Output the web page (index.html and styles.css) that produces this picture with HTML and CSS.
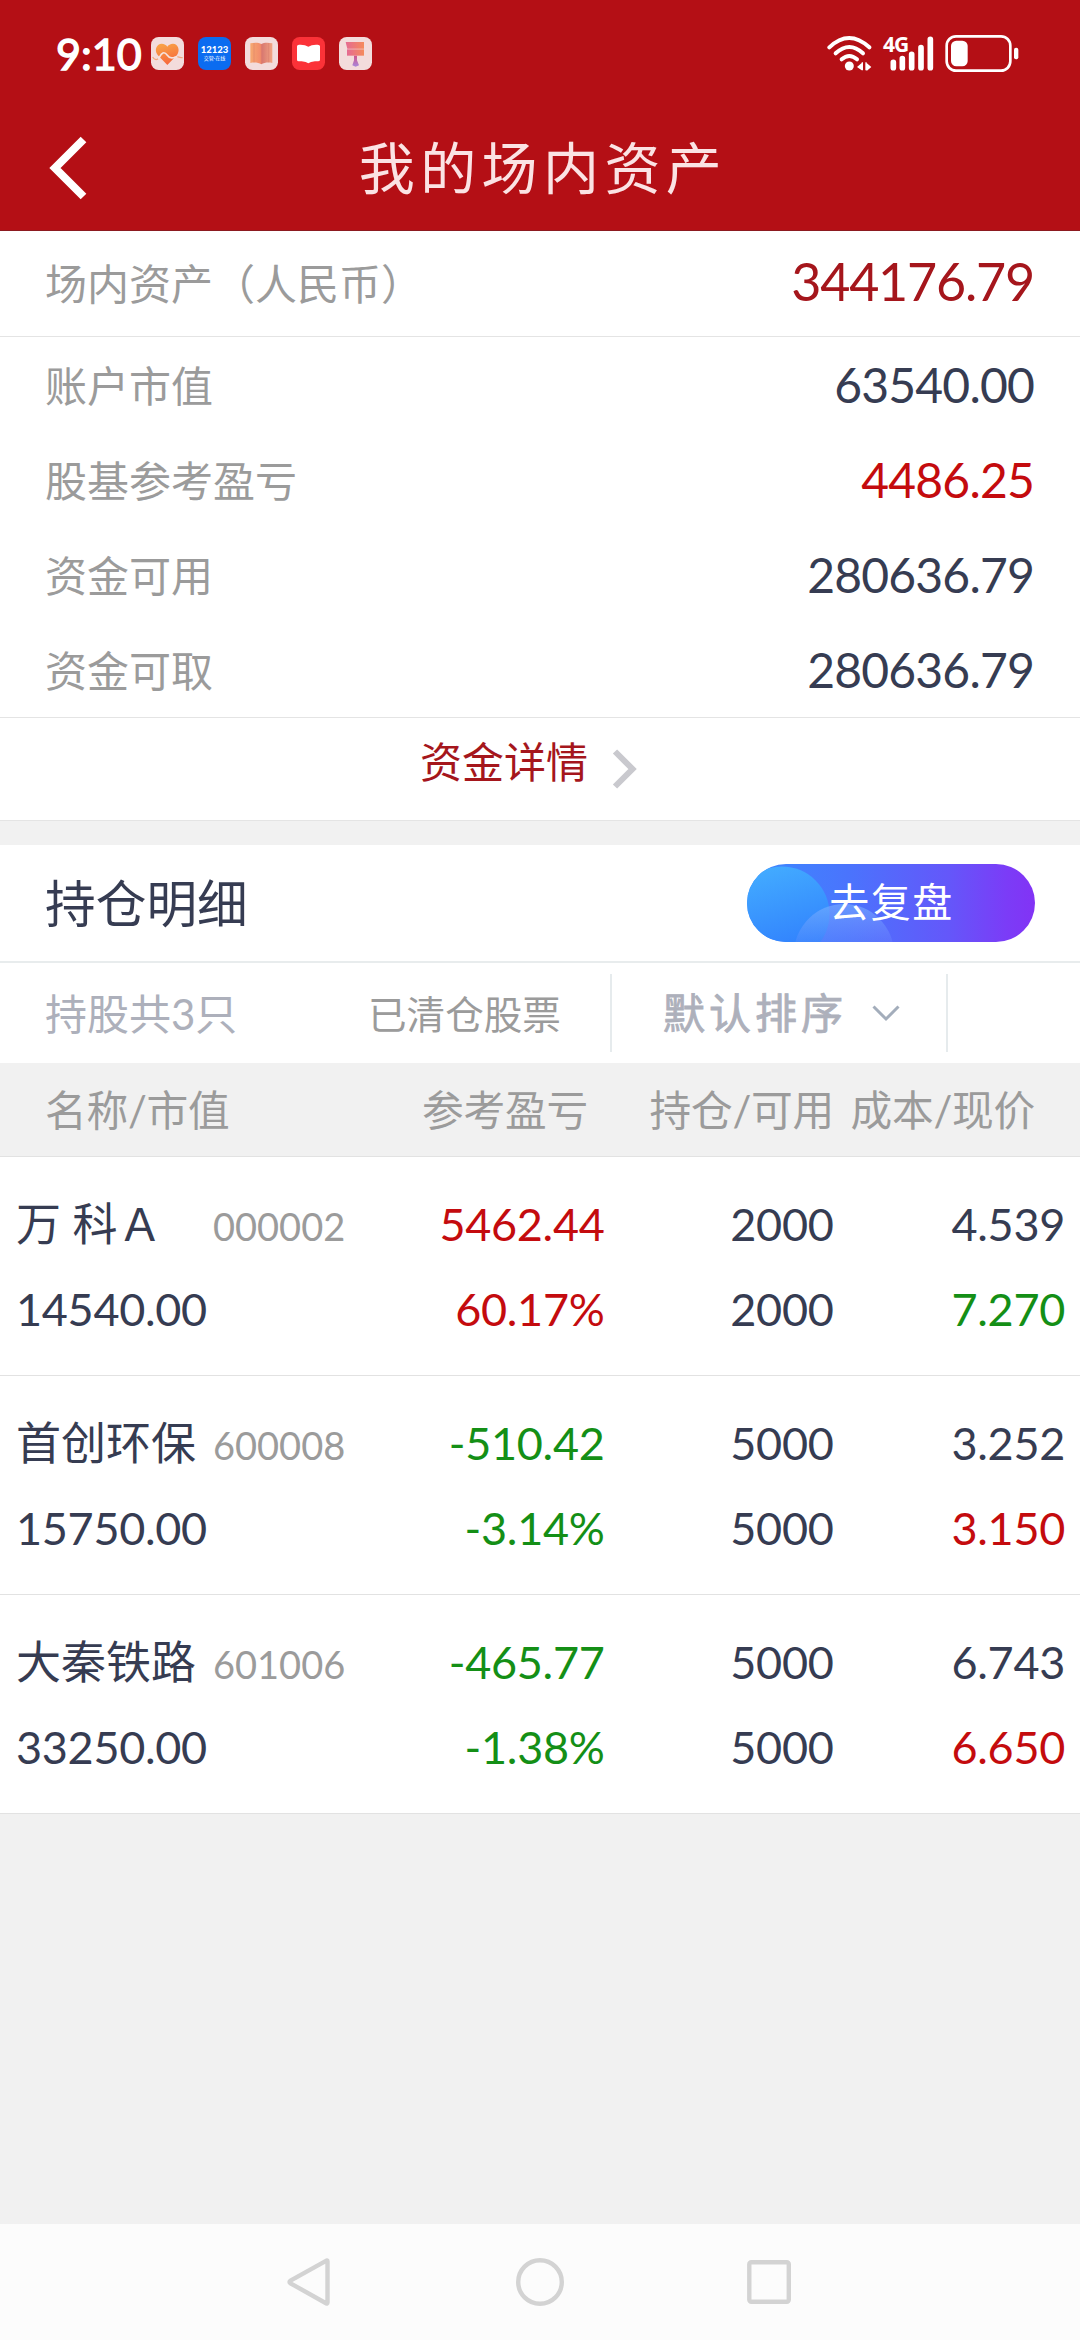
FILE: index.html
```html
<!DOCTYPE html>
<html lang="zh-CN">
<head>
<meta charset="utf-8">
<title>我的场内资产</title>
<link rel="stylesheet" href="styles.css">
</head>
<body>
<div class="screen">
  <header class="top">
    <div class="status">
      <span class="clock">9:10</span>
      <div class="apps">
        <svg class="app" viewBox="0 0 99 99"><defs><linearGradient id="heart" x1="0" y1="0" x2="0.3" y2="1"><stop offset="0" stop-color="#f9a848"/><stop offset="1" stop-color="#f76a3c"/></linearGradient></defs><rect width="99" height="99" rx="23" fill="#f3dcdc"/><path d="M49 84 20 54C8 38 18 20 32 20c8 0 14 4 17 9 3-5 9-9 17-9 14 0 23 18 12 34z" fill="url(#heart)"/><path d="M5 60c6 10 14 12 20 1 7-13 14-20 24-6 8 12 18 8 24 5 7-3 14 2 22 2" fill="none" stroke="#f6e3df" stroke-width="5"/><path d="M5 60c5 8 11 10 16 5M79 59c5 1 10 3 16 3" fill="none" stroke="#f0a680" stroke-width="4"/></svg>
        <span class="app app-traffic"><b>12123</b><i>交管·在线</i></span>
        <svg class="app" viewBox="0 0 99 99"><defs><linearGradient id="book" x1="0" y1="0" x2="1" y2="0"><stop offset="0" stop-color="#f6a871"/><stop offset=".48" stop-color="#f28b6c"/><stop offset=".53" stop-color="#d87870"/><stop offset="1" stop-color="#f2a584"/></linearGradient></defs><rect width="99" height="99" rx="23" fill="#f3dcdc"/><path d="M16 19c12-3 25-3 33 2 8-5 21-5 33-2v59c-12-3-25-1-33 4-8-5-21-7-33-4z" fill="url(#book)"/><path d="M49 21v60M27 18v58M71 18v58" stroke="#d5766b" stroke-width="2" opacity=".6"/></svg>
        <svg class="app" viewBox="0 0 99 99"><rect width="99" height="99" rx="23" fill="#fb3238"/><path d="M15 28q0-5 6-5h5q14 0 23 6 9-6 23-6h5q7 0 7 5v40q0 5-6 5h-9q-14 1-20 6-6-5-20-6h-9q-5 0-5-5z" fill="#fff"/></svg>
        <svg class="app" viewBox="0 0 99 99"><defs><linearGradient id="brush" x1="0" y1="0" x2="1" y2="0"><stop offset="0" stop-color="#e56a92"/><stop offset="1" stop-color="#f58a5c"/></linearGradient><linearGradient id="grip" x1="0" y1="0" x2="0" y2="1"><stop offset="0" stop-color="#d0568a"/><stop offset="1" stop-color="#a987dc"/></linearGradient></defs><rect width="99" height="99" rx="23" fill="#f3dcdc"/><path d="M20 15h55v20H25z" fill="url(#brush)"/><path d="M24 37h51v19H24z" fill="url(#brush)"/><path d="M45 56h9v14l6 15-10 4-10-4 5-15z" fill="url(#grip)"/></svg>
      </div>
      <div class="signals">
        <svg class="wifi" viewBox="50 45 135 111"><g fill="none" stroke="#fff" stroke-width="12" stroke-linecap="round"><path d="M57 82Q116 26 177 82"/><path d="M76 100Q117 62 158 100"/><path d="M94 118Q117 98 140 118"/></g><circle cx="117" cy="138" r="13.500" fill="#fff"/><path d="M140 141l14-12v22zM183 141l-14 12v-24zM154 127h4v24h-4zM165 127h4v24h-4z" fill="#fff"/></svg>
        <span class="cell"><svg viewBox="218 45 153 111"><path d="M249 127v16M276 116v27M304 103v40M332 83v60M360 58v85" stroke="#fff" stroke-width="17" stroke-linecap="round"/></svg><em>4G</em></span>
        <svg class="battery" viewBox="404 45 222 111"><rect x="409" y="49" width="191" height="103" rx="28" fill="none" stroke="#fff" stroke-width="8"/><rect x="422" y="62" width="50" height="77" rx="16" fill="#fff"/><rect x="611" y="83" width="13" height="35" rx="6" fill="#fff"/></svg>
      </div>
    </div>
    <div class="appbar">
      <svg class="back" viewBox="0 0 40 64"><path d="M34.500 3.500 6 32l28.500 28.500" fill="none" stroke="#fff" stroke-width="8"/></svg>
      <h1>我的场内资产</h1>
    </div>
  </header>

  <section class="summary">
    <div class="line total"><span>场内资产（人民币）</span><strong class="num brand">344176.79</strong></div>
    <div class="line"><span>账户市值</span><strong class="num">63540.00</strong></div>
    <div class="line"><span>股基参考盈亏</span><strong class="num up">4486.25</strong></div>
    <div class="line"><span>资金可用</span><strong class="num">280636.79</strong></div>
    <div class="line"><span>资金可取</span><strong class="num">280636.79</strong></div>
    <a class="more"><span>资金详情</span><svg viewBox="0 0 26 40"><path d="M3 2.500 20.500 20 3 37.500" fill="none" stroke="#c9c9ce" stroke-width="6"/></svg></a>
  </section>

  <section class="holdings">
    <div class="heading">
      <h2>持仓明细</h2>
      <a class="review"><svg viewBox="0 0 288 78"><defs><linearGradient id="c1" x1=".3" y1="0" x2=".6" y2="1"><stop offset="0" stop-color="#43acff"/><stop offset="1" stop-color="#2f7cfd"/></linearGradient><linearGradient id="c2" x1="0" y1="0" x2="0" y2="1"><stop offset="0" stop-color="#7db2ff" stop-opacity=".6"/><stop offset=".45" stop-color="#7b96ff" stop-opacity=".12"/></linearGradient></defs><circle cx="35" cy="50" r="47.500" fill="url(#c1)"/><circle cx="97" cy="90" r="50" fill="url(#c2)"/></svg><span>去复盘</span></a>
    </div>
    <div class="filters">
      <span class="count">持股共3只</span>
      <span class="cleared">已清仓股票</span>
      <span class="sort"><span>默认排序</span><svg viewBox="0 0 28 17"><path d="M1.500 1.500 14 14 26.500 1.500" fill="none" stroke="#a3adbb" stroke-width="3"/></svg></span>
    </div>
    <div class="row thead"><span>名称/市值</span><span>参考盈亏</span><span>持仓/可用</span><span>成本/现价</span></div>

    <div class="row stock">
      <div class="cell-name"><span class="name">万 科Ａ</span><span class="code">000002</span></div><span class="up">5462.44</span><span>2000</span><span>4.539</span>
      <span class="worth">14540.00</span><span class="up">60.17%</span><span>2000</span><span class="down">7.270</span>
    </div>
    <div class="row stock">
      <div class="cell-name"><span class="name">首创环保</span><span class="code">600008</span></div><span class="down">-510.42</span><span>5000</span><span>3.252</span>
      <span class="worth">15750.00</span><span class="down">-3.14%</span><span>5000</span><span class="up">3.150</span>
    </div>
    <div class="row stock">
      <div class="cell-name"><span class="name">大秦铁路</span><span class="code">601006</span></div><span class="down">-465.77</span><span>5000</span><span>6.743</span>
      <span class="worth">33250.00</span><span class="down">-1.38%</span><span>5000</span><span class="up">6.650</span>
    </div>
  </section>

  <nav class="sysnav">
    <svg viewBox="0 0 48 48"><path d="M41.500 3.500v41q0 1.500-1.500.7L4.500 25.300q-2-1.300 0-2.600L40 2.800q1.500-.8 1.500.7z"/></svg>
    <svg viewBox="0 0 48 48"><circle cx="24" cy="24" r="21.800"/></svg>
    <svg viewBox="0 0 48 48"><rect x="3.300" y="4.300" width="39.500" height="39.500" rx="2"/></svg>
  </nav>
</div>
</body>
</html>
```
FILE: styles.css
```css
* { box-sizing: border-box; margin: 0; padding: 0; }

body {
  width: 1080px;
  background: #f1f1f1;
  font-family: Lato, "Noto Sans CJK SC", sans-serif;
  font-kerning: none;
  color: #363c52;
}

svg { display: block; }
h1, h2, strong { font-weight: 400; }

.screen { display: flex; flex-direction: column; height: 2340px; }
.up { color: #c40b0e; }
.down { color: #148f16; }

/* status bar and title */
.top { height: 231px; background: #b40f15; border-bottom: 1px solid #8c1a20; }
.status { display: flex; align-items: flex-start; height: 107px; padding: 35px 61px 0 56px; color: #fff; }
.clock { width: 95px; font-size: 43px; line-height: 38px; -webkit-text-stroke: 1.400px #fff; }
.apps { display: flex; gap: 14px; padding-top: 2px; }
.app { width: 33px; height: 33px; }
.app-traffic { display: flex; flex-direction: column; align-items: center; justify-content: center; border-radius: 8px; background: #0b6cf0; overflow: hidden; }
.app-traffic b { font-size: 9.500px; line-height: 9px; font-weight: 900; }
.app-traffic i { font-size: 5px; line-height: 8px; font-style: normal; white-space: nowrap; }
.signals { display: flex; gap: 11px; margin-left: auto; }
.signals svg { height: 37px; }
.wifi { width: 45px; }
.battery { width: 74px; }
.cell { position: relative; width: 51px; }
.cell em { position: absolute; left: 0; top: -1px; font: 700 21px/21px "Noto Sans", sans-serif; letter-spacing: -1px; }
.appbar { display: grid; grid-template-columns: 40px 1fr 40px; align-items: center; height: 121px; padding: 0 49px; }
.back { width: 40px; height: 64px; }
.appbar h1 { padding-left: 6px; text-align: center; font-size: 56px; line-height: 70px; letter-spacing: 5.400px; color: #fbe3e4; }

/* account summary */
.summary { background: #fff; border-bottom: 1px solid #e4e4e4; color: #9b9b9b; }
.line { display: flex; justify-content: space-between; align-items: center; height: 95px; padding: 0 46px 0 45px; font-size: 42px; line-height: 60px; }
.line span { padding-top: 2px; }
.line.total { height: 106px; border-bottom: 1px solid #e4e4e4; }
.line.total span { padding-top: 0; }
.num { font-size: 48px; letter-spacing: -.800px; color: #363c52; }
.num.up { color: #c40b0e; }
.num.brand { padding-bottom: 5px; font-size: 52px; letter-spacing: -1.200px; color: #a5161c; }
.more { display: flex; align-items: center; height: 103px; padding-left: 420px; gap: 24px; border-top: 1px solid #e4e4e4; font-size: 42px; line-height: 60px; color: #a5161c; }
.more span { padding-bottom: 14px; }
.more svg { width: 26px; height: 40px; }

/* holdings */
.holdings { margin-top: 24px; background: #fff; }
.heading { display: flex; align-items: center; justify-content: space-between; height: 118px; padding: 0 45px; border-bottom: 2px solid #e8eced; }
.heading h2 { padding-top: 2px; font-size: 50.700px; line-height: 70px; }
.review { position: relative; display: flex; align-items: center; justify-content: center; width: 288px; height: 78px; border-radius: 39px; overflow: hidden; background: linear-gradient(90deg, #3b8bff, #4a74fd 35%, #6457fa 70%, #7b3cf7 90%, #8233f5); color: #fff; font-size: 40px; line-height: 60px; letter-spacing: 1.500px; }
.review svg { position: absolute; inset: 0; }
.review span { z-index: 1; padding: 0 0 2px 1px; }
.filters { display: grid; grid-template-columns: 323px 242px 338px; align-items: center; height: 100px; padding-left: 45px; font-size: 42px; line-height: 60px; color: #adb0bb; }
.count { padding-top: 1px; }
.cleared { padding-top: 1px; font-size: 38.600px; color: #9b9b9b; }
.sort { display: flex; align-items: center; gap: 25px; height: 78px; padding-left: 51px; border: solid #e6ebed; border-width: 0 2px; letter-spacing: 4px; -webkit-text-stroke: .8px #adb0bb; }
.sort svg { width: 28px; height: 17px; }

.row { display: grid; border-bottom: 1px solid #e2e2e2; }
.row > :not(:nth-child(4n+1)) { text-align: right; }
.thead { grid-template-columns: 401px 187px 246px 1fr; align-items: center; height: 94px; padding-right: 45px; background: #f1f1f1; font-size: 41.700px; line-height: 60px; letter-spacing: -.2px; color: #9b9b9b; }
.thead > :first-child { padding-left: 45px; }
.stock { grid-template-columns: 401px 203.500px 229px 1fr; grid-auto-rows: 85px; height: 219px; padding: 25px 15px 0 0; font-size: 45px; line-height: 85px; letter-spacing: -.3px; }
.cell-name { display: flex; align-items: baseline; padding-left: 16px; }
.name { width: 197px; white-space: pre; letter-spacing: 0; }
.code { font-size: 38px; letter-spacing: 0; color: #9b9b9b; }
.worth { padding-left: 16px; }

/* system navigation */
.sysnav { display: flex; justify-content: center; align-items: center; gap: 182px; height: 116px; margin-top: auto; background: #fcfcfc; }
.sysnav svg { width: 48px; height: 48px; fill: none; stroke: #d3d3d3; stroke-width: 4.400px; }
```
